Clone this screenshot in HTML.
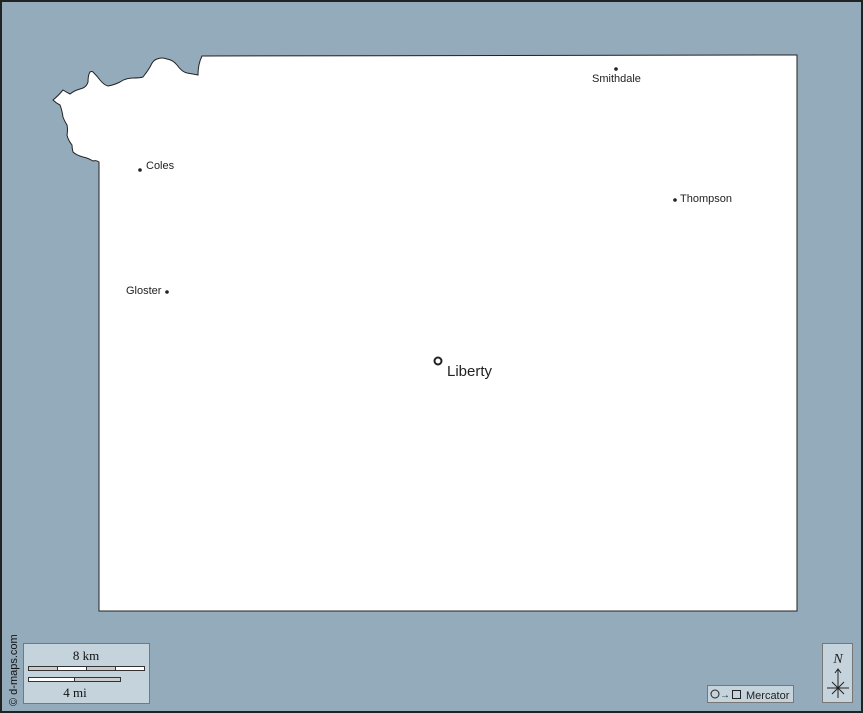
<!DOCTYPE html>
<html><head><style>
html,body{margin:0;padding:0;background:#94abbb}
svg{display:block}
text{font-family:"Liberation Sans",sans-serif}
</style></head><body>
<svg width="863" height="713" viewBox="0 0 863 713" xmlns="http://www.w3.org/2000/svg">
<rect x="1" y="1" width="861" height="711" fill="#94abbb" stroke="#222" stroke-width="2"/>
<path d="M202,56 L797,55 L797,611 L99,611 L99,162 Q96,160 93,161 Q88,158 83,157 Q76,155 73,152 Q72,148 72,145 Q68,140 67,135 Q68,130 67,125 Q64,120 63,117 Q62,110 60,105 Q56,103 53,100 Q58,96 63,90 Q66,92 70,94 Q74,91 77,90 Q80,89 83,88 Q87,86 88,82 Q88,75 90,72 Q92,71 93,72 Q97,76 100,80 Q104,85 108,86 Q114,85 120,82 Q126,78 133,78 Q140,78 143,77 Q147,72 150,67 Q153,60 157,59 Q162,57 167,59 Q173,60 177,65 Q182,72 187,73 Q193,74 198,75 Q198,64 202,56 Z" fill="#fff" stroke="#222" stroke-width="1"/>
<g fill="#222">
<circle cx="616" cy="69" r="1.8"/><circle cx="140" cy="170" r="1.8"/><circle cx="675" cy="200" r="1.8"/><circle cx="167" cy="292" r="1.8"/>
</g>
<circle cx="438" cy="361" r="3.5" fill="#fff" stroke="#222" stroke-width="2"/>
<g font-size="11" fill="#222">
<text x="592" y="82">Smithdale</text>
<text x="146" y="169">Coles</text>
<text x="680" y="202">Thompson</text>
<text x="126" y="294">Gloster</text>
</g>
<text x="447" y="376" font-size="15" fill="#222">Liberty</text>
<text transform="translate(17,706) rotate(-90)" font-size="11" fill="#111">© d-maps.com</text>
<rect x="23.5" y="643.5" width="126" height="60" fill="#c5d3dc" stroke="#777"/>
<text x="86" y="660" font-size="13" text-anchor="middle" fill="#111" style="font-family:'Liberation Serif',serif">8 km</text>
<rect x="28.5" y="666.5" width="116" height="4" fill="#fff" stroke="#333"/>
<rect x="28.5" y="666.5" width="29" height="4" fill="#ccc" stroke="#333"/>
<rect x="86.5" y="666.5" width="29" height="4" fill="#ccc" stroke="#333"/>
<rect x="28.5" y="677.5" width="92" height="4" fill="#ccc" stroke="#333"/>
<rect x="28.5" y="677.5" width="46" height="4" fill="#fff" stroke="#333"/>
<text x="75" y="697" font-size="13" text-anchor="middle" fill="#111" style="font-family:'Liberation Serif',serif">4 mi</text>
<rect x="707.5" y="685.5" width="86" height="17" fill="#c5d3dc" stroke="#777"/>
<circle cx="715" cy="694" r="4" fill="none" stroke="#222"/>
<text x="720" y="698" font-size="10" fill="#222">→</text>
<rect x="732.5" y="690.5" width="8" height="8" fill="none" stroke="#222"/>
<text x="746" y="699" font-size="11" fill="#222">Mercator</text>
<rect x="822.5" y="643.5" width="30" height="59" fill="#c5d3dc" stroke="#777"/>
<text x="838" y="663" font-size="14" font-style="italic" text-anchor="middle" fill="#222" style="font-family:'Liberation Serif',serif">N</text>
<path d="M838,670 L838,698 M835,673 L838,669 L841,673 M827,688 L849,688 M832,682 L844,694 M844,682 L832,694" stroke="#222" stroke-width="1" fill="none"/>
</svg>
</body></html>
